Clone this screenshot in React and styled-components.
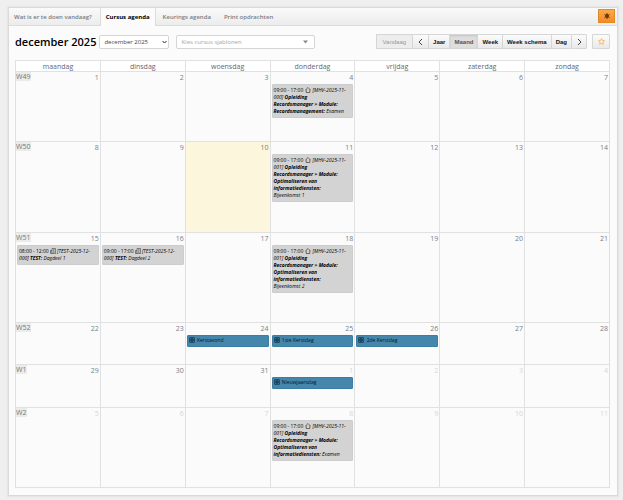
import React, { useState } from 'react';
import styled, { createGlobalStyle, css } from 'styled-components';

// Styled Components

const GlobalStyle = createGlobalStyle`
  * {
    box-sizing: border-box;
  }

  body {
    margin: 0;
    background: #eeefee;
    color: #000;
    font-family: 'Open Sans', 'Noto Sans', sans-serif;
    font-size: 7px;
  }

  button,
  select,
  input {
    margin: 0;
    font-family: inherit;
  }
`;

const Page = styled.div`
  padding: 7px 5px 4px 8px;
`;

const Panel = styled.main`
  background: #fbfbfb;
  border: 1px solid #dadada;
  box-shadow: 0 0 1px 1px #e6e6e6;
`;

const TabBar = styled.nav`
  display: flex;
  height: 18px;
  padding-right: 2px;
  background: linear-gradient(#fafafa, #ececec);
  border-bottom: 1px solid #dcdcdc;
`;

const Tab = styled.a`
  display: flex;
  align-items: center;
  height: 17px;
  padding: 0 8px 0 5px;
  color: #777d85;
  font-size: 6px;
  font-weight: 600;
  text-decoration: none;
  white-space: nowrap;

  ${(props) =>
    props.$active &&
    css`
      height: 18px;
      margin-right: 2px;
      padding: 0 5px;
      background: #fbfbfb;
      border: solid #dcdcdc;
      border-width: 0 1px;
      color: #000;
      font-weight: 700;
    `}
`;

const SettingsButton = styled.button`
  display: flex;
  align-items: center;
  justify-content: center;
  width: 17px;
  height: 14px;
  margin: 1px 0 0 auto;
  padding: 0;
  border: 1px solid #e08a2c;
  background: linear-gradient(#fba94b, #f68a22);
  color: #6b3a08;
`;

const Content = styled.div`
  padding: 8px 7px 7px 6px;
`;

const Toolbar = styled.header`
  display: flex;
  align-items: center;
  height: 15px;
  margin-bottom: 11px;
`;

const Title = styled.h1`
  margin: 0 3px 0 0;
  font-size: 11px;
  font-weight: 600;
  line-height: 15px;
  white-space: nowrap;
`;

const SelectWrap = styled.div`
  position: relative;
  width: ${(props) => props.$width}px;
  margin-right: 7px;
  color: #333;
`;

const Select = styled.select`
  display: block;
  width: 100%;
  height: 14px;
  padding: 0 12px 0 4px;
  appearance: none;
  border: 1px solid #d5d5d5;
  border-radius: 2px;
  background: #fff;
  color: ${(props) => (props.$placeholder ? '#a5a5a5' : '#444')};
  font-size: 6px;
`;

const SelectArrow = styled.svg`
  position: absolute;
  top: 5px;
  right: ${(props) => props.$right}px;
  width: 5px;
  height: 4px;
  pointer-events: none;
`;

const ViewButtons = styled.div`
  display: flex;
  margin-left: auto;
  margin-right: 5px;
`;

const ViewButton = styled.button`
  display: flex;
  align-items: center;
  justify-content: center;
  height: 15px;
  padding: 0 4px;
  border: 1px solid #d6d6d6;
  border-right-width: 0;
  background: linear-gradient(#fbfbfb, #e9e9e9);
  color: #111;
  font-family: 'Liberation Sans', Arial, sans-serif;
  font-size: 6px;
  font-weight: 700;
  white-space: nowrap;

  &:first-child {
    border-radius: 1px 0 0 1px;
  }

  &:last-child {
    border-right-width: 1px;
    border-radius: 0 1px 1px 0;
  }

  &:disabled {
    padding: 0 6px;
    background: #ededed;
    color: #999;
    font-weight: 400;
  }

  ${(props) =>
    props.$active &&
    css`
      background: #dedede;
      box-shadow: inset 0 1px 2px #c4c4c4;
      color: #555;
    `}
`;

const ArrowButton = styled(ViewButton)`
  width: 16px;
  padding: 0;
`;

const FavoriteButton = styled(ViewButton)`
  width: 18px;
  padding: 0;
  border-right-width: 1px;
`;

const Calendar = styled.table`
  width: 100%;
  table-layout: fixed;
  border-collapse: collapse;
`;

const DayName = styled.th`
  height: 11px;
  padding: 0;
  border: 1px solid #e1e1e1;
  background: #fff;
  color: #626873;
  font-size: 7px;
  font-weight: 400;
  line-height: 9px;
`;

const DayCell = styled.td`
  height: ${(props) => props.$height}px;
  padding: 0;
  border: 1px solid #e1e1e1;
  background: ${(props) => (props.$today ? '#fcf6dd' : 'transparent')};
  vertical-align: top;
`;

const DayTop = styled.div`
  display: flex;
  align-items: flex-start;
  height: 12px;
`;

const WeekNumber = styled.span`
  padding: 0 1px 0 0;
  background: #ebebeb;
  color: #777;
  font-size: 7px;
  line-height: 9px;
`;

const DayNumber = styled.span`
  margin-left: auto;
  padding: 1px 1px 0 0;
  color: ${(props) => (props.$muted ? '#d6d6d6' : '#7a8089')};
  font-size: 7px;
  line-height: 10px;
`;

const Event = styled.div`
  margin: 0 1px;
  padding: 2px 6px 2px 1px;
  border: 1px solid #cdcdcd;
  border-radius: 1px;
  background: #d3d3d3;
  color: #000;
  font-size: 5px;
  line-height: 7px;
  overflow: hidden;

  ${(props) =>
    props.$holiday &&
    css`
      padding: 1px 1px 2px;
      border-color: #3c7da3;
      background: #4586ac;
      color: #061820;
    `}
`;

const EventIcon = styled.svg`
  width: 6px;
  height: 6px;
  margin-right: ${(props) => props.$gap || 1}px;
  vertical-align: -1px;
  fill: none;
  stroke: currentColor;
`;

// Icons

const HomeIcon = () => (
  <EventIcon $gap={2} viewBox="0 0 12 12" aria-hidden="true">
    <path d="M.6 6.4 6 1l5.4 5.4M2.4 5v6h7.2V5" />
  </EventIcon>
);

const BuildingIcon = () => (
  <EventIcon viewBox="0 0 12 12" strokeWidth="0.8" aria-hidden="true">
    <path d="M4 11V1h7v10H1V5h3M6 3.5h3M6 6h3M6 8.5h3M2.5 7v2" />
  </EventIcon>
);

const HolidayIcon = () => (
  <EventIcon viewBox="0 0 12 12" aria-hidden="true">
    <rect x="1" y="1" width="10" height="10" rx="1" />
    <path d="M6 2v8M2 6h8M3.5 3.5h5v5h-5z" />
  </EventIcon>
);

const Chevron = ({ d }) => (
  <svg width="5" height="8" viewBox="0 0 5 8" fill="none" stroke="#444" aria-hidden="true">
    <path d={d} />
  </svg>
);

const SettingsIcon = () => (
  <svg width="6" height="6" viewBox="0 0 12 12" stroke="currentColor" strokeWidth="2" aria-hidden="true">
    <circle cx="6" cy="6" r="3" fill="currentColor" />
    <path d="M6 0v12M1 3l10 6M1 9l10-6" />
  </svg>
);

const StarIcon = () => (
  <svg width="7" height="7" viewBox="0 0 14 14" fill="none" stroke="#f5b04c" strokeWidth="1.6" aria-hidden="true">
    <path d="m7 1.2 1.8 3.9 4.2.5-3.1 2.9.8 4.2L7 10.6l-3.7 2.1.8-4.2L1 5.6l4.2-.5z" />
  </svg>
);

// Data

const dayNames = ['maandag', 'dinsdag', 'woensdag', 'donderdag', 'vrijdag', 'zaterdag', 'zondag'];

const tabs = ['Wat is er te doen vandaag?', 'Cursus agenda', 'Keurings agenda', 'Print opdrachten'];

const optimize = 'Opleiding Recordsmanager > Module: Optimaliseren van informatiediensten:';

const weeks = [
  {
    number: 49,
    height: 70,
    days: [1, 2, 3, 4, 5, 6, 7],
    events: {
      4: {
        time: '09:00 - 17:00',
        code: '[MHV-2025-11-000]',
        course: 'Opleiding Recordsmanager > Module: Recordsmanagement:',
        part: 'Examen',
      },
    },
  },
  {
    number: 50,
    height: 91,
    days: [8, 9, 10, 11, 12, 13, 14],
    events: {
      11: { time: '09:00 - 17:00', code: '[MHV-2025-11-001]', course: optimize, part: 'Bijeenkomst 1' },
    },
  },
  {
    number: 51,
    height: 90,
    days: [15, 16, 17, 18, 19, 20, 21],
    events: {
      15: { time: '08:00 - 12:00', office: true, code: '[TEST-2025-12-000]', course: 'TEST:', part: 'Dagdeel 1' },
      16: { time: '09:00 - 17:00', office: true, code: '[TEST-2025-12-000]', course: 'TEST:', part: 'Dagdeel 2' },
      18: { time: '09:00 - 17:00', code: '[MHV-2025-11-001]', course: optimize, part: 'Bijeenkomst 2' },
    },
  },
  {
    number: 52,
    height: 42,
    days: [22, 23, 24, 25, 26, 27, 28],
    events: {
      24: { holiday: 'Kerstavond' },
      25: { holiday: '1ste Kerstdag' },
      26: { holiday: '2de Kerstdag' },
    },
  },
  {
    number: 1,
    height: 43,
    days: [29, 30, 31, 1, 2, 3, 4],
    events: { 1: { holiday: 'Nieuwjaarsdag' } },
  },
  {
    number: 2,
    height: 80,
    days: [5, 6, 7, 8, 9, 10, 11],
    events: {
      8: { time: '09:00 - 17:00', code: '[MHV-2025-11-001]', course: optimize, part: 'Examen' },
    },
  },
];

const CalendarEvent = ({ event }) => {
  if (event.holiday) {
    return (
      <Event $holiday>
        <HolidayIcon /> {event.holiday}
      </Event>
    );
  }

  return (
    <Event>
      {event.time} {event.office ? <BuildingIcon /> : <HomeIcon />}
      <em>
        {event.code} <b>{event.course}</b> {event.part}
      </em>
    </Event>
  );
};

// Agenda Component

const App = () => {
  const [view, setView] = useState('Maand');

  return (
    <Page>
      <GlobalStyle />
      <Panel>
        <TabBar>
          {tabs.map((tab) => (
            <Tab key={tab} href="#" $active={tab === 'Cursus agenda'}>
              {tab}
            </Tab>
          ))}
          <SettingsButton aria-label="Instellingen">
            <SettingsIcon />
          </SettingsButton>
        </TabBar>

        <Content>
          <Toolbar>
            <Title>december 2025</Title>
            <SelectWrap $width={70}>
              <Select aria-label="Maand" defaultValue="2025-12">
                <option value="2025-12">december 2025</option>
              </Select>
              <SelectArrow $right={2} viewBox="0 0 10 8" fill="none" stroke="#222" strokeWidth="2">
                <path d="m1 2 4 4 4-4" />
              </SelectArrow>
            </SelectWrap>
            <SelectWrap $width={139}>
              <Select aria-label="Cursus sjablonen" $placeholder>
                <option>Kies cursus sjablonen</option>
              </Select>
              <SelectArrow $right={7} viewBox="0 0 10 8" fill="#888">
                <path d="M0 1h10L5 7z" />
              </SelectArrow>
            </SelectWrap>

            <ViewButtons>
              <ViewButton disabled>Vandaag</ViewButton>
              <ArrowButton aria-label="Vorige">
                <Chevron d="M4 1 1 4l3 3" />
              </ArrowButton>
              {['Jaar', 'Maand', 'Week', 'Week schema', 'Dag'].map((name) => (
                <ViewButton key={name} $active={view === name} onClick={() => setView(name)}>
                  {name}
                </ViewButton>
              ))}
              <ArrowButton aria-label="Volgende">
                <Chevron d="m1 1 3 3-3 3" />
              </ArrowButton>
            </ViewButtons>
            <FavoriteButton aria-label="Favoriet">
              <StarIcon />
            </FavoriteButton>
          </Toolbar>

          <Calendar>
            <thead>
              <tr>
                {dayNames.map((name) => (
                  <DayName key={name} scope="col">
                    {name}
                  </DayName>
                ))}
              </tr>
            </thead>
            <tbody>
              {weeks.map((week) => (
                <tr key={week.number}>
                  {week.days.map((day, index) => (
                    <DayCell key={day} $height={week.height} $today={day === 10 && week.number === 50}>
                      <DayTop>
                        {index === 0 && <WeekNumber>W{week.number}</WeekNumber>}
                        <DayNumber $muted={week.number < 49 && day < 29}>{day}</DayNumber>
                      </DayTop>
                      {week.events[day] && <CalendarEvent event={week.events[day]} />}
                    </DayCell>
                  ))}
                </tr>
              ))}
            </tbody>
          </Calendar>
        </Content>
      </Panel>
    </Page>
  );
};

export default App;
